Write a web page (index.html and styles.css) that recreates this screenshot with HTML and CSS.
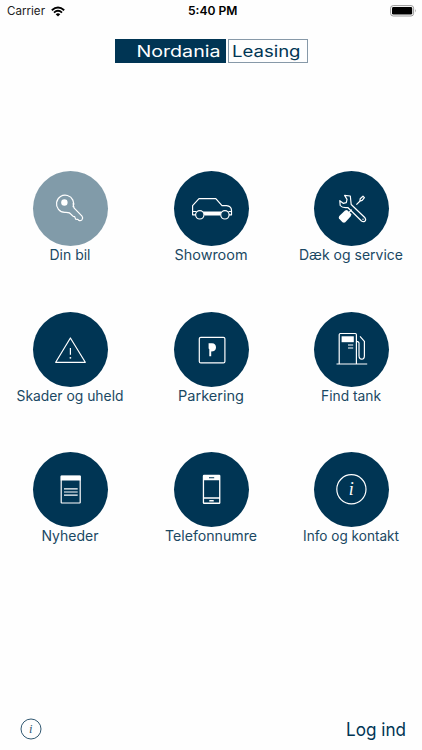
FILE: index.html
```html
<!DOCTYPE html>
<html lang="da">
<head>
<meta charset="utf-8">
<meta name="viewport" content="width=device-width, initial-scale=1">
<title>Nordania Leasing</title>
<link rel="stylesheet" href="styles.css">
</head>
<body>
<header class="status">
  <div class="status-left">
    <svg class="carrier" width="40" height="22"><text x="0" y="15" textLength="38" lengthAdjust="spacingAndGlyphs">Carrier</text></svg>
    <svg class="wifi" width="14" height="11" viewBox="0 0 14 11"><path d="M.8 4.2Q7-1 13.2 4.2M3 6.6Q7 3.1 11 6.6"/><path class="solid" d="M4.7 8.2Q7 6.4 9.3 8.2L7 10.6Z"/></svg>
  </div>
  <svg class="clock" width="52" height="22"><text x="1" y="15" textLength="49.5" lengthAdjust="spacingAndGlyphs">5:40 PM</text></svg>
  <svg class="battery" width="27" height="12" viewBox="0 0 27 12"><rect class="case" x=".6" y=".6" width="23" height="10.4" rx="2.6"/><rect x="2" y="2" width="20.2" height="7.6" rx="1.4"/><path class="cap" d="M25 4Q26.6 5.8 25 7.6Z"/></svg>
</header>
<div class="brand">
  <div class="brand-name"><svg width="111" height="23"><text x="21.5" y="17.6" textLength="84" lengthAdjust="spacingAndGlyphs">Nordania</text></svg></div>
  <div class="brand-kind"><svg width="78" height="21"><text x="3" y="16.6" textLength="68.5" lengthAdjust="spacingAndGlyphs">Leasing</text></svg></div>
</div>
<main class="menu">
  <a class="tile tile-muted">
    <svg class="disc" viewBox="0 0 75 75"><path d="M40 36.2A8.6 8.6 0 1 0 31.8 41.4C35.7 41.1 37.2 41.7 38.2 43.5L40.2 45.4 41.7 45.6 42.6 48.1 44.8 48.4 46 49.5Q47.5 50.2 48.9 48.8 50.4 47 49 45.1L41.2 37.2Q40 34.5 40.2 32"/><circle class="solid" cx="31.4" cy="31.5" r="3.2"/></svg>
    <svg class="label" viewBox="0 0 140 20"><text x="50%" y="14" textLength="41" lengthAdjust="spacingAndGlyphs">Din bil</text></svg>
  </a>
  <a class="tile">
    <svg class="disc disc-mid" viewBox="0 0 75 75"><path d="M21.5 43.8H18.6V34.6L25 27.7H41.8L48 34.6H52.5Q57.5 35.2 57.5 39.5V43.8H55M30.5 44H46M19 40.5H22.5M54.5 40.5H57"/><path class="solid" d="M29 40.5H47.5L46.3 44H30.3Z"/><circle cx="25.8" cy="43.8" r="4.2"/><circle cx="50.9" cy="43.8" r="4.2"/></svg>
    <svg class="label" viewBox="0 0 140 20"><text x="50%" y="14" textLength="73" lengthAdjust="spacingAndGlyphs">Showroom</text></svg>
  </a>
  <a class="tile">
    <svg class="disc" viewBox="0 0 75 75"><path d="M30.6 24.4L36.3 25 37.2 33.5 51 46.8Q52.4 48.8 50.8 50.2 49.3 51.3 47.5 50L33.8 36.5Q28.5 37.4 26.2 34.5L25.8 29.7 29.2 32.3 32.3 31.6 33 28.4Z"/><path d="M42.4 33.7L46.6 29.5M45.8 30.3L46.2 27.8 49 25.2 50.4 26.6 48.2 29.4 45.8 30.3"/><path class="solid" d="M33 38.9L37.5 43.2 36.6 45.5 31.3 51.2Q30 52.1 28.5 51.2L25 47.6Q24.4 46.2 25.3 45L31 39.4Z"/><path d="M34.5 42L37.8 38.7"/><circle class="solid" cx="49" cy="48.3" r=".7"/></svg>
    <svg class="label label-right" viewBox="0 0 140 20"><text x="50%" y="14" textLength="104" lengthAdjust="spacingAndGlyphs">Dæk og service</text></svg>
  </a>
  <a class="tile">
    <svg class="disc" viewBox="0 0 75 75"><path d="M37.4 26L52.3 50.3H22.7ZM37.4 36V42.8"/><circle class="solid" cx="37.4" cy="45.8" r=".9"/></svg>
    <svg class="label" viewBox="0 0 140 20"><text x="50%" y="14" textLength="107" lengthAdjust="spacingAndGlyphs">Skader og uheld</text></svg>
  </a>
  <a class="tile">
    <svg class="disc disc-mid" viewBox="0 0 75 75"><rect x="25.3" y="25.3" width="25.6" height="25.6" rx="1.5"/><path class="solid" d="M34.6 31.3H38Q42 31.6 42 35.4 41.9 39.3 37.2 39.6V44.3H35.3V37.2L34.6 36.5Z"/></svg>
    <svg class="label" viewBox="0 0 140 20"><text x="50%" y="14" textLength="66" lengthAdjust="spacingAndGlyphs">Parkering</text></svg>
  </a>
  <a class="tile">
    <svg class="disc" viewBox="0 0 75 75"><path d="M22.5 52H53.2M25.2 52V22.7Q25.2 21.5 26.4 21.5H41.3Q42.4 21.5 42.4 22.7V52M34 33H39.2M34 36H39.2M42.4 29.7H44L45 30.9V43.8Q45.1 47.2 47.8 47.2 50.4 47.2 50.4 43.8V29.3L46 24.3"/><rect class="solid" x="27.6" y="24.3" width="12.2" height="5.9"/></svg>
    <svg class="label label-right" viewBox="0 0 140 20"><text x="50%" y="14" textLength="60" lengthAdjust="spacingAndGlyphs">Find tank</text></svg>
  </a>
  <a class="tile">
    <svg class="disc" viewBox="0 0 75 75"><rect x="28.2" y="24.2" width="19" height="26.8" rx=".5"/><path class="solid" d="M27.7 23.7H47.7V28.5H27.7Z"/><path d="M31 36.8H44.7M31 40H44.7M31 43.2H44.7"/></svg>
    <svg class="label" viewBox="0 0 140 20"><text x="50%" y="14" textLength="57" lengthAdjust="spacingAndGlyphs">Nyheder</text></svg>
  </a>
  <a class="tile">
    <svg class="disc disc-mid" viewBox="0 0 75 75"><rect class="solid" x="28.8" y="22.8" width="17.6" height="29.2" rx="1.2"/><path class="hole" d="M30.1 28.2H45.1V45.2H30.1ZM30.1 46.7H45.1V50.6H30.1ZM35 25.2H40.2V26.3H35Z"/><rect class="solid" x="35.2" y="48" width="4.6" height="1.5" rx=".5"/></svg>
    <svg class="label" viewBox="0 0 140 20"><text x="50%" y="14" textLength="92" lengthAdjust="spacingAndGlyphs">Telefonnumre</text></svg>
  </a>
  <a class="tile">
    <svg class="disc" viewBox="0 0 75 75"><circle cx="37.4" cy="37.3" r="14.6"/><text class="glyph" x="37.2" y="43">i</text></svg>
    <svg class="label label-right" viewBox="0 0 140 20"><text x="50%" y="14" textLength="96" lengthAdjust="spacingAndGlyphs">Info og kontakt</text></svg>
  </a>
</main>
<footer class="footer">
  <svg class="about" width="22" height="22" viewBox="0 0 22 22"><circle cx="11" cy="11" r="10"/><text x="10.8" y="14.9">i</text></svg>
  <svg class="login" width="72" height="30"><text x="4" y="20" textLength="60" lengthAdjust="spacingAndGlyphs">Log ind</text></svg>
</footer>
</body>
</html>
```
FILE: styles.css
```css
:root { --navy: #003554; --muted: #819ba9; }
* { box-sizing: border-box; }
body {
  margin: 0;
  width: 422px;
  height: 750px;
  display: flex;
  flex-direction: column;
  background: #fefefe;
  color: var(--navy);
  font-family: Inter, "Liberation Sans", sans-serif;
  overflow: hidden;
}
svg { display: block; flex: none; }

.status {
  height: 22px;
  padding: 0 5px 0 7px;
  display: grid;
  grid-template-columns: 180px 1fr auto;
  align-items: center;
}
.status-left { display: flex; align-items: center; gap: 4px; }
.carrier text { font-size: 11.5px; fill: #222; }
.wifi { fill: none; stroke: #000; stroke-width: 1.9; }
.wifi .solid { fill: #000; stroke: none; }
.clock text { font-size: 11.5px; font-weight: 600; }
.battery .case { fill: none; stroke: #999; stroke-width: 1; }
.battery .cap { fill: #999; }

.brand {
  margin: 17px 0 0 114.5px;
  display: flex;
  gap: 2px;
}
.brand-name { width: 111px; height: 23.5px; background: var(--navy); }
.brand-kind { width: 80px; height: 23.5px; border: 1px solid #8799a8; }
.brand text { font-size: 16px; fill: var(--navy); }
.brand-name text { fill: #fff; }

.menu {
  margin-top: 108.5px;
  display: grid;
  grid-template-columns: repeat(3, 1fr);
  grid-auto-rows: 140.67px;
}
.tile { display: flex; flex-direction: column; align-items: center; }
.disc {
  width: 75px;
  height: 75px;
  border-radius: 50%;
  background: var(--navy);
  fill: none;
  stroke: #fff;
  stroke-width: 1.2;
  stroke-linejoin: round;
}
.disc-mid { margin-left: 1px; }
.tile-muted .disc { background: var(--muted); }
.disc .solid { fill: #fff; stroke: none; }
.disc .hole { fill: var(--navy); stroke: none; }
.disc .glyph {
  fill: #fff;
  stroke: none;
  font: italic 18px "Liberation Serif", serif;
  text-anchor: middle;
}
.label { width: 140px; height: 20px; }
.label-right { margin-right: 1px; }
.label text { font-size: 14px; fill: #1a4863; text-anchor: middle; }

.footer {
  margin-top: auto;
  height: 34px;
  padding: 0 8px 0 20px;
  display: flex;
  justify-content: space-between;
}
.about { margin-top: 2px; fill: none; stroke: #315871; stroke-width: 1; }
.about text {
  fill: #315871;
  stroke: none;
  font: italic 12.5px "Liberation Serif", serif;
  text-anchor: middle;
}
.login text { font-size: 18.3px; fill: var(--navy); }
```
